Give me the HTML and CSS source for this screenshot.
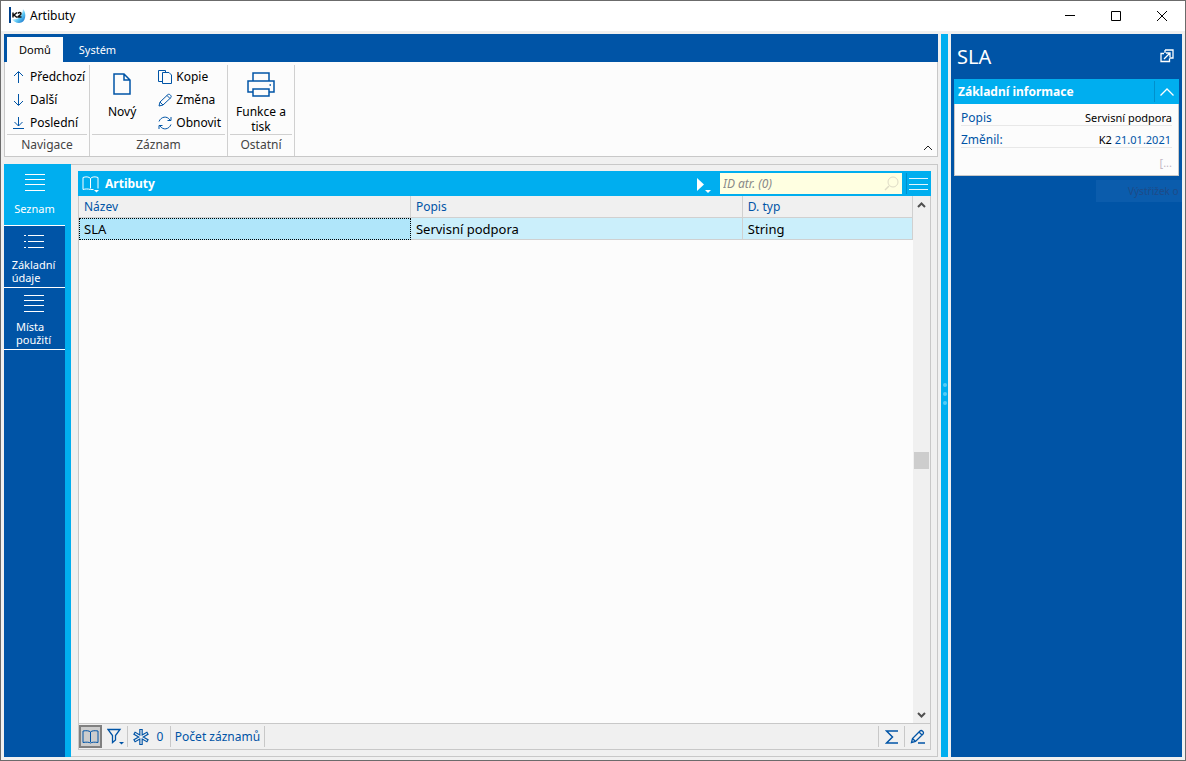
FILE: index.html
```html
<!DOCTYPE html>
<html lang="cs">
<head>
<meta charset="utf-8">
<title>Artibuty</title>
<link rel="stylesheet" href="styles.css">
</head>
<body>
<div class="window">
  <header class="titlebar">
    <svg class="app-logo" width="18" height="18" viewBox="0 0 18 18">
      <defs><linearGradient id="orb" x1="0" y1="0" x2="1" y2="1"><stop offset="0.3" stop-color="#ffffff"/><stop offset="0.6" stop-color="#5fcaf5"/><stop offset="1" stop-color="#0a5fc0"/></linearGradient></defs>
      <rect width="2" height="16" fill="#00418c"/>
      <path d="M14 2c4 4 3 14-4 14-3 0-6-2-7-4 5 1 10-1 11-10z" fill="url(#orb)"/>
      <path d="M4 5.500v5M8 5.500L5 8l3 2.500M9 6.500c1-1.500 3-1 3 .3S9 9 9 10h3.500" fill="none" stroke="#111" stroke-width="1.500"/>
    </svg>
    <h1 class="window-title">Artibuty</h1>
    <div class="window-buttons">
      <button class="window-button" aria-label="Minimalizovat"><svg width="12" height="12"><path d="M1 5.500h10" stroke="#000"/></svg></button>
      <button class="window-button" aria-label="Maximalizovat"><svg width="12" height="12"><path d="M1.500 1.500h9v9h-9z" fill="none" stroke="#000"/></svg></button>
      <button class="window-button" aria-label="Zavřít"><svg width="12" height="12"><path d="M1 1l10 10M11 1L1 11" stroke="#000"/></svg></button>
    </div>
  </header>

  <div class="workspace">
    <main class="main">
      <section class="ribbon">
        <nav class="tabs">
          <button class="tab tab-active">Domů</button>
          <button class="tab">Systém</button>
        </nav>
        <div class="ribbon-body">
          <div class="group group-nav">
            <div class="group-tools">
              <div class="tool-stack">
                <button class="tool"><svg class="icon" width="14" height="14"><path d="M6.500 13V2M2 6l4.500-4.500L11 6"/></svg>Předchozí</button>
                <button class="tool"><svg class="icon" width="14" height="14"><path d="M6.500 1v11M2 8l4.500 4.500L11 8"/></svg>Další</button>
                <button class="tool"><svg class="icon" width="14" height="14"><path d="M6.500 1v9M2.500 6l4 4 4-4M1 12.500h11"/></svg>Poslední</button>
              </div>
            </div>
            <div class="group-title">Navigace</div>
          </div>
          <div class="group group-record">
            <div class="group-tools">
              <button class="big-tool"><svg class="icon" width="18" height="24"><path stroke-width="1.500" d="M1 2h10l6 6v14H1zM11 2v6h6"/></svg><span>Nový</span></button>
              <div class="tool-stack">
                <button class="tool"><svg class="icon" width="14" height="14"><path d="M4 11.500H.5V.5h7V2M4.500 2.500H11l2.500 2.500v8.500h-9z"/></svg>Kopie</button>
                <button class="tool"><svg class="icon" width="14" height="14"><path d="M1 13l1-4 8-7.500c1.500-1 4 1.500 3 3L5 12zM2 9l3 3M9 2.500l3 3"/></svg>Změna</button>
                <button class="tool"><svg class="icon" width="14" height="14"><path d="M1 5.500C3 .5 9-.5 12 4M13 1v3.500H9.500M13 8.500C11 13.500 5 14.500 2 10M1 13V9.500h3.500"/></svg>Obnovit</button>
              </div>
            </div>
            <div class="group-title">Záznam</div>
          </div>
          <div class="group group-other">
            <div class="group-tools">
              <button class="big-tool"><svg class="icon" width="28" height="26"><g stroke-width="1.500"><path d="M6 9V1h16v8M6 20H1V9h26v11h-5M6 17h16v7H6z"/><path d="M22.500 13h1.500"/></g></svg><span>Funkce a<br>tisk</span></button>
            </div>
            <div class="group-title">Ostatní</div>
          </div>
          <button class="collapse" aria-label="Sbalit pás"><svg width="10" height="6"><path d="M1 5l4-4 4 4" fill="none" stroke="#222"/></svg></button>
        </div>
      </section>

      <div class="content">
        <nav class="sidebar">
          <button class="side-item side-active"><svg class="side-icon" width="20" height="18"><path d="M0 .5h20M0 5.500h20M0 10.500h20M0 16.500h20"/></svg><span>Seznam</span></button>
          <button class="side-item"><svg class="side-icon side-icon-list" width="20" height="14"><path d="M0 .5h2M4 .5h16M0 6.500h2M4 6.500h16M0 12.500h2M4 12.500h16"/></svg><span>Základní<br>údaje</span></button>
          <button class="side-item"><svg class="side-icon" width="20" height="18"><path d="M0 .5h20M0 5.500h20M0 10.500h20M0 16.500h20"/></svg><span>Místa<br>použití</span></button>
        </nav>
        <section class="panel">
          <div class="browser">
            <div class="browser-head">
              <button class="plain" aria-label="Kniha"><svg width="18" height="20"><path d="M8.500 4.500v10M8.500 4.500C7 2.500 3.500 2.500 1 3.500v12c2.500-.7 5-.7 7.500 0M8.500 4.500C10 2.500 13.500 2.500 16 3.500v11M8.500 15.500h3" fill="none" stroke="#fff"/><path d="M12 16h5l-2.500 2.500z" fill="#fff"/></svg></button>
              <h2 class="browser-title">Artibuty</h2>
              <button class="plain play" aria-label="Spustit"><svg width="14" height="18"><path d="M0 3l7 6.500L0 16z" fill="#fff"/><path d="M8 15h6l-3 3z" fill="#fff"/></svg></button>
              <div class="search">
                <input class="search-input" type="text" placeholder="ID atr. (0)" aria-label="ID atr.">
                <svg width="15" height="15"><path d="M5 10L1 14" stroke="#dedbc6" stroke-width="1.500"/><circle cx="9" cy="6" r="5" fill="none" stroke="#dedbc6"/></svg>
              </div>
              <button class="plain menu" aria-label="Nabídka"><svg width="19" height="14"><path d="M0 1.500h19M0 7.500h19M0 12.500h19" stroke="#e4f6fe"/></svg></button>
            </div>
            <div class="grid-area">
              <div class="grid">
                <table class="table">
                  <thead><tr><th class="col-wide">Název</th><th class="col-wide">Popis</th><th>D. typ</th></tr></thead>
                  <tbody><tr><td class="cell-focus">SLA</td><td>Servisní podpora</td><td>String</td></tr></tbody>
                </table>
              </div>
              <div class="scrollbar">
                <svg width="9" height="6"><path d="M1 5l3.500-3.500L8 5" fill="none" stroke="#505050" stroke-width="2"/></svg>
                <div class="thumb"></div>
                <svg width="9" height="6"><path d="M1 1l3.500 3.500L8 1" fill="none" stroke="#505050" stroke-width="2"/></svg>
              </div>
            </div>
            <footer class="status">
              <button class="plain status-book" aria-label="Kniha"><svg class="icon" width="17" height="14"><path d="M8.500 2v10M8.500 2C7 .5 4 .5 1 1v11.500c3-.5 6-.5 7.500.5M8.500 2C10 .5 13 .5 16 1v11.500c-3-.5-6-.5-7.500.5"/></svg></button>
              <button class="plain status-filter" aria-label="Filtr"><svg class="icon" width="18" height="17"><path stroke-width="1.300" d="M1 1.500h12L8.500 7.500v4.500l-3 2.500v-7z"/><path d="M12 14h5l-2.500 2.500z" fill="#0054a6" stroke="none"/></svg></button>
              <button class="plain status-star"><svg width="16" height="16" viewBox="0 0 16 16"><g stroke="#0054a6" stroke-width="3.500"><path d="M8 0v16M1 4l14 8M15 4L1 12"/></g><g stroke="#f0f0f0" stroke-width="1.200"><path d="M8 1v14M2 4.600l12 6.800M14 4.600L2 11.400"/></g></svg><span>0</span></button>
              <button class="plain status-count">Počet záznamů</button>
              <button class="plain status-sum" aria-label="Součet"><svg class="icon" width="14" height="14"><path stroke-width="1.500" d="M13 1H1.500L7.500 7l-6 6H13"/></svg></button>
              <button class="plain status-edit" aria-label="Upravit"><svg class="icon" width="16" height="15"><path stroke-width="1.300" d="M1.500 13.500l1-4L10 2c1.500-1.500 4.500 1 3 3l-7.500 7.500zM2.500 9.500l3 3M9 3l3 3M8 14h7"/></svg></button>
            </footer>
          </div>
        </section>
      </div>
    </main>

    <div class="splitter"><i class="dot"></i><i class="dot"></i><i class="dot"></i></div>

    <aside class="preview">
      <div class="preview-head">
        <h2 class="preview-title">SLA</h2>
        <button class="plain" aria-label="Otevřít"><svg width="14" height="16"><path d="M4 4.500H1v8h8.500V9.500M5 1h8v8H9.500M5 1v3M4 10l6-6M6 4h4v4" fill="none" stroke="#fff" stroke-width="1.300"/></svg></button>
      </div>
      <section class="card">
        <div class="card-head">
          <h3 class="card-title">Základní informace</h3>
          <button class="plain card-toggle" aria-label="Sbalit"><svg width="14" height="8"><path d="M.5 7.500L7 1l6.500 6.500" fill="none" stroke="#fff" stroke-width="1.300"/></svg></button>
        </div>
        <dl class="facts">
          <div class="fact"><dt>Popis</dt><dd>Servisní podpora</dd></div>
          <div class="fact"><dt>Změnil:</dt><dd class="changed">K2 <span class="date">21.01.2021</span></dd></div>
          <div class="fact fact-more"><dd>[...</dd></div>
        </dl>
      </section>
      <div class="ghost">Výstřižek o</div>
    </aside>
  </div>
</div>
</body>
</html>
```
FILE: styles.css
```css
* { box-sizing: border-box; }

body {
  margin: 0;
  font: 12px/16px "Noto Sans", sans-serif;
  color: #000;
}

h1, h2, h3, dl, dd { margin: 0; font: inherit; }

button {
  margin: 0;
  padding: 0;
  border: 0;
  background: none;
  color: inherit;
  font: inherit;
}

svg { display: block; flex: none; }

.icon { fill: none; stroke: #0054a6; }

.window {
  display: flex;
  flex-direction: column;
  height: 100vh;
  border: 1px solid #6b6b6b;
  background: #f0f0f0;
}

.titlebar {
  display: flex;
  align-items: center;
  height: 30px;
  padding-left: 8px;
  background: #fff;
}
.window-title { margin-left: 3px; }
.window-buttons { display: flex; margin-left: auto; }
.window-button { display: grid; place-items: center; width: 46px; height: 28px; }

.workspace {
  display: flex;
  flex: 1;
  gap: 3px;
  min-height: 0;
  padding: 3px;
}

.main { display: flex; flex: 1; flex-direction: column; gap: 7px; min-width: 0; }

/* Ribbon */
.tabs {
  display: flex;
  height: 28px;
  padding: 3px 3px 0;
  background: #0054a6;
  font-size: 11px;
}
.tab { padding: 0 16px; color: #fff; }
.tab-active { padding: 0 12px; background: #fcfcfc; color: #000; }

.ribbon-body {
  display: flex;
  height: 95px;
  padding: 3px 0 0 2px;
  border: 1px solid #c8c8c8;
  border-top: 0;
  background: #fcfcfc;
}
.group {
  display: flex;
  flex-direction: column;
  height: 91px;
  padding-right: 2px;
  border-right: 1px solid #d0d0d0;
}
.group + .group { padding-left: 2px; }
.group-nav { width: 83px; }
.group-record { width: 138px; }
.group-other { width: 67px; }
.group-tools { display: flex; height: 70px; border-bottom: 1px solid #d0d0d0; }
.group-title { line-height: 20px; color: #444; text-align: center; }
.tool-stack { display: flex; flex-direction: column; }
.group-nav .tool-stack { padding-left: 5px; }
.tool { display: flex; align-items: center; gap: 4px; height: 23px; white-space: nowrap; }
.big-tool {
  display: flex;
  flex-direction: column;
  align-items: center;
  flex: 1;
  padding-top: 7px;
  line-height: 15px;
}
.big-tool svg { margin-bottom: 8px; }
.group-record .big-tool { padding-right: 6px; }
.group-record .tool-stack { padding-right: 4px; }
.group-other .big-tool svg { margin-bottom: 6px; }
.collapse { align-self: flex-end; margin-left: auto; padding: 5px 4px; }

/* Side tabs */
.content { display: flex; flex: 1; min-height: 0; }
.sidebar {
  display: flex;
  flex-direction: column;
  width: 67px;
  border-right: 6px solid #00aeef;
  background: #0054a6;
}
.side-item {
  display: flex;
  flex-direction: column;
  align-items: center;
  justify-content: space-between;
  height: 62px;
  padding: 7px 2px 3px 0;
  border-bottom: 1px solid #fff;
  color: #fff;
  font-size: 11px;
  line-height: 13px;
  text-align: left;
}
.side-active { padding: 10px 0 10px; background: #00aeef; }
.side-icon { stroke: #fff; }
.side-icon-list { margin-top: 2px; }

/* Record list */
.panel {
  display: flex;
  flex: 1;
  min-width: 0;
  padding: 6px;
  border: 1px solid #c8c8c8;
  border-left: 0;
}
.browser { display: flex; flex: 1; flex-direction: column; min-width: 0; margin-left: 1px; }
.plain { display: flex; align-items: center; justify-content: center; }
.browser-head {
  display: flex;
  align-items: center;
  height: 25px;
  padding: 0 3px 0 4px;
  background: #00aeef;
}
.browser-title { margin-left: 5px; color: #fff; font-weight: 700; }
.play { margin-left: auto; margin-right: 9px; }
.search {
  display: flex;
  align-items: center;
  width: 182px;
  height: 21px;
  padding: 0 3px;
  background: #ffffe1;
}
.search-input {
  flex: 1;
  min-width: 0;
  padding: 0;
  border: 0;
  outline: 0;
  background: none;
  font: italic 12px/16px "Noto Sans", sans-serif;
}
.search-input::placeholder { color: #888; opacity: 1; }
.menu { height: 21px; margin-left: 4px; padding-left: 2px; border-left: 1px solid #0090cc; }

.grid-area {
  display: flex;
  flex: 1;
  min-height: 0;
  border: 1px solid #c8c8c8;
  border-top: 0;
  background: #fcfcfc;
}
.grid { flex: 1; }
.table { width: 100%; border-collapse: separate; border-spacing: 0; table-layout: fixed; }
.table th, .table td {
  height: 22px;
  padding: 0 5px;
  border-right: 1px solid #d0d0d0;
  border-bottom: 1px solid #d0d0d0;
  text-align: left;
}
.table th { background: #f0f0f0; color: #0054a6; font-weight: 400; }
.table td { background: #cbeffb; font-size: 13px; }
.table .cell-focus { padding: 0 4px; border: 1px dotted #000; background: #b0e6fa; }
.col-wide { width: 39.8%; }
.scrollbar {
  display: flex;
  flex-direction: column;
  align-items: center;
  justify-content: space-between;
  width: 17px;
  padding: 6px 0 5px;
  background: #f0f0f0;
}
.thumb { width: 15px; height: 17px; background: #cdcdcd; }

.status {
  display: flex;
  align-items: center;
  height: 26px;
  border: 1px solid #c8c8c8;
  border-top: 0;
  color: #0054a6;
}
.status .plain { height: 21px; border-right: 1px solid #c8c8c8; }
.status .status-book { width: 23px; height: 23px; border: 2px solid #808080; background: #cdcdcd; }
.status-filter { width: 26px; padding-left: 2px; }
.status-star { gap: 8px; width: 43px; padding-right: 2px; }
.status-count { width: 94px; }
.status .status-sum { width: 27px; margin-left: auto; border-left: 1px solid #c8c8c8; }
.status .status-edit { width: 25px; border-right: 0; }

/* Divider */
.splitter {
  display: flex;
  flex-direction: column;
  align-items: center;
  justify-content: center;
  gap: 5px;
  width: 7px;
  padding-bottom: 4px;
  background: #00aeef;
}
.dot { width: 4px; height: 4px; border-radius: 2px; background: #55ccf7; }

/* Preview */
.preview { width: 231px; padding: 0 3px; overflow: hidden; background: #0054a6; }
.preview-head {
  display: flex;
  align-items: center;
  justify-content: space-between;
  height: 45px;
  padding: 0 5px 0 3px;
  color: #fff;
}
.preview-title { font-size: 20px; line-height: 24px; }
.card-head {
  display: flex;
  align-items: center;
  justify-content: space-between;
  height: 25px;
  padding-left: 4px;
  background: #00aeef;
  color: #fff;
}
.card-title { font-weight: 700; }
.card-toggle { width: 25px; height: 21px; border-left: 1px solid #0090cc; }
.facts { padding: 0 6px 5px; border: 1px solid #c8c8c8; border-top: 0; background: #fcfcfc; }
.fact {
  display: flex;
  align-items: flex-end;
  justify-content: space-between;
  height: 22px;
  border-bottom: 1px solid #e8e8e8;
  line-height: 14px;
}
.fact dt { color: #0054a6; }
.fact dd { font-size: 11px; }
.changed { padding-right: 1px; }
.date { color: #0054a6; }
.fact-more { justify-content: flex-end; border-bottom: 0; color: #c4b8c4; }
.ghost {
  height: 22px;
  margin: 4px -3px 0 142px;
  padding-left: 32px;
  background: #0b5cac;
  color: #1d4b88;
  font-size: 10px;
  line-height: 22px;
  white-space: nowrap;
}
```
